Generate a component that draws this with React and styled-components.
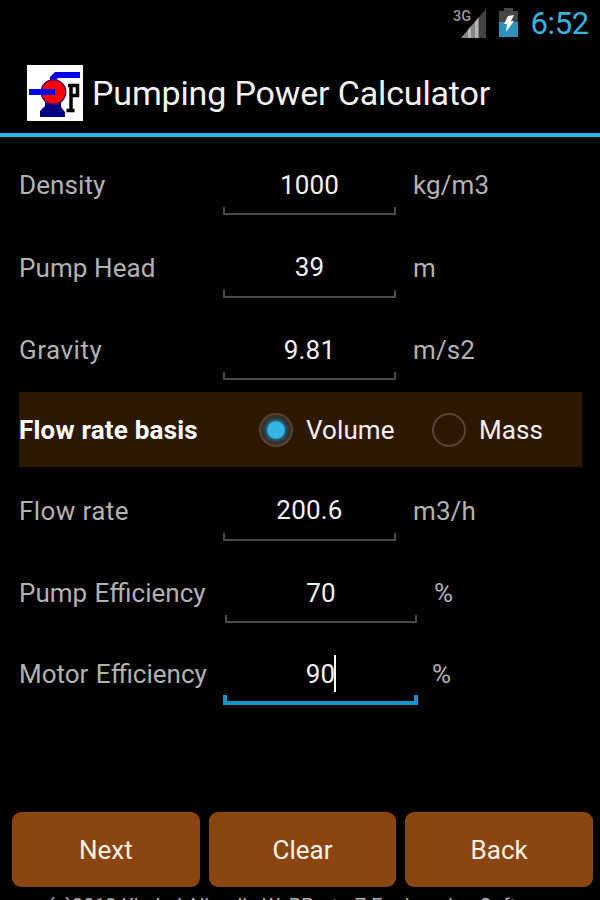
import styled, { createGlobalStyle } from "styled-components";

const GlobalStyle = createGlobalStyle`
  html, body {
    margin: 0;
    background: #000;
    overflow: hidden;
  }
`;

const Screen = styled.div`
  box-sizing: border-box;
  background: #000;
  color: #b2b2b2;
  display: flex;
  flex-direction: column;
  font-family: Roboto, "Noto Sans", sans-serif;
  font-size: 26px;
  height: 900px;
  overflow: hidden;
  width: 600px;
`;

const StatusBar = styled.div`
  display: flex;
  flex: none;
  height: 50px;
  justify-content: flex-end;
  padding-right: 11px;
`;

const StatusIcons = styled.svg`
  display: block;
  height: 50px;
  width: 80px;
`;

const Clock = styled.span`
  color: #33b5e5;
  font-size: 31px;
  letter-spacing: -0.3px;
  line-height: 48px;
`;

const TitleBar = styled.header`
  align-items: center;
  border-bottom: 4px solid #33b5e5;
  box-sizing: border-box;
  display: flex;
  flex: none;
  gap: 9px;
  height: 87px;
  padding: 2px 0 0 27px;
`;

const Logo = styled.svg`
  display: block;
  height: 56px;
  width: 56px;
`;

const Title = styled.h1`
  color: #f3f3f3;
  font-size: 34px;
  font-weight: 400;
  letter-spacing: -0.15px;
  line-height: 40px;
  margin: 0;
`;

const Form = styled.main`
  display: flex;
  flex: none;
  flex-direction: column;
  height: 675px;
  padding-left: 19px;
`;

const Row = styled.div`
  display: flex;
  flex: none;
  height: ${(props) => props.$height || 82.5}px;
`;

const Label = styled.label`
  letter-spacing: ${(props) => props.$spacing ?? 0.1}px;
  line-height: 97px;
  white-space: nowrap;
  width: ${(props) => props.$width || 204}px;
  word-spacing: ${(props) => (props.$spacing === 0 ? 1 : 0)}px;
`;

const Field = styled.div`
  color: #f3f3f3;
  display: flex;
  flex-direction: column;
  height: ${(props) => (props.$focused ? 79 : 78)}px;
  width: ${(props) => props.$width || 173}px;
`;

const FieldValue = styled.div`
  align-items: center;
  box-sizing: border-box;
  display: flex;
  flex: 1;
  justify-content: center;
  letter-spacing: 0.2px;
  line-height: 38px;
  padding-top: ${(props) => (props.$focused ? 27 : 25)}px;
`;

// Open-topped bracket that the text fields sit on
const FieldLine = styled.div`
  border: ${(props) => (props.$focused ? "4px solid #1295c9" : "2px solid #4b4b4b")};
  border-top: none;
  box-sizing: border-box;
  flex: none;
  height: ${(props) => (props.$focused ? 10 : 8)}px;
`;

const Caret = styled.span`
  background: #fff;
  height: 37px;
  margin: 0 -1px 0 -1px;
  width: 2px;
`;

const Unit = styled.span`
  letter-spacing: 0.1px;
  line-height: 97px;
  padding-left: ${(props) => props.$gap || 17}px;
`;

const BasisRow = styled.div`
  align-items: center;
  background: #2f1800;
  color: #f3f3f3;
  display: flex;
  flex: none;
  height: 75px;
  margin: 7.5px 0 -4.5px;
  width: 563px;
`;

const BasisLabel = styled.span`
  color: #fff;
  font-weight: 700;
  letter-spacing: 0.2px;
  width: 240px;
`;

const Option = styled.label`
  align-items: center;
  display: flex;
  gap: 13px;
  letter-spacing: 0.1px;
  width: ${(props) => props.$width}px;
`;

const Radio = styled.span`
  background: ${(props) =>
    props.$checked
      ? "radial-gradient(circle, #33b5e5 0 8px, #216277 9.5px, #30383a 12px, #332b22 16px)"
      : "transparent"};
  border: 2px solid #59432f;
  border-radius: 50%;
  box-sizing: border-box;
  height: 34px;
  width: 34px;
`;

const Buttons = styled.div`
  display: flex;
  flex: none;
  gap: 9px;
  padding: 0 7px 0 12px;
`;

const Button = styled.button`
  background: #8b4511;
  border: none;
  border-radius: 9px;
  color: #fff3e6;
  flex: 1;
  font: inherit;
  height: 75px;
  padding: 0;
`;

const Footer = styled.footer`
  flex: none;
  font-size: 19.8px;
  line-height: 22px;
  margin: 9px 0 0 48px;
  white-space: nowrap;
`;

const FIELDS = [
  { label: "Density", value: "1000", unit: "kg/m3" },
  { label: "Pump Head", value: "39", unit: "m" },
  { label: "Gravity", value: "9.81", unit: "m/s2", spacing: 0.5 },
];

// No letter spacing on the efficiency labels, it would break their "ffi" ligature
const RATES = [
  { label: "Flow rate", value: "200.6", unit: "m3/h", spacing: 0.4 },
  { label: "Pump Efficiency", value: "70", unit: "%", labelWidth: 206, width: 192, height: 80.5, spacing: 0 },
  { label: "Motor Efficiency", value: "90", unit: "%", width: 195, gap: 14, spacing: 0, focused: true },
];

function InputRow({ item }) {
  return (
    <Row $height={item.height}>
      <Label $width={item.labelWidth} $spacing={item.spacing}>
        {item.label}
      </Label>
      <Field $width={item.width} $focused={item.focused}>
        <FieldValue $focused={item.focused}>
          {item.value}
          {item.focused && <Caret />}
        </FieldValue>
        <FieldLine $focused={item.focused} />
      </Field>
      <Unit $gap={item.gap}>{item.unit}</Unit>
    </Row>
  );
}

function PumpLogo() {
  return (
    <Logo viewBox="0 0 56 56">
      <rect width="56" height="56" fill="#fff" />
      <path d="M18 37h16v5l4 5v5h2H13v-6l5-5z" fill="#000084" />
      <path d="M23 16v-4l5-5h25v6H31l-3 4z" fill="#0000f0" />
      <circle cx="26.500" cy="27" r="12.200" fill="#f00" stroke="#5b0060" strokeWidth="1.500" />
      <path d="M2 24h26v6H2z" fill="#0000f0" />
      <path d="M44 46V20.500h6.500v10H44M41 20.500h4M39.500 45.500h8" fill="none" stroke="#000" strokeWidth="3.500" />
    </Logo>
  );
}

function PhoneIcons() {
  return (
    <StatusIcons viewBox="0 0 80 50">
      <text x="3" y="20.500" fill="#999" fontSize="15" fontWeight="500" textLength="18" lengthAdjust="spacingAndGlyphs">
        3G
      </text>
      <path d="M11 38 36 9v29z" fill="#424242" />
      <path d="M11 38 29 17v21z" fill="#858585" />
      <path d="M18 30v8h3V26zM25 22v16h3V18z" fill="#b5b5b5" />
      <path d="M49 11h5V8h9v3h5v11H49z" fill="#474747" />
      <path d="M49 22h19v15H49z" fill="#2f93b9" />
      <path d="m58 16 6-1-3 6h3l-8 11 1-8h-3z" fill="#fff" />
    </StatusIcons>
  );
}

export default function App() {
  return (
    <Screen>
      <GlobalStyle />
      <StatusBar>
        <PhoneIcons />
        <Clock>6:52</Clock>
      </StatusBar>
      <TitleBar>
        <PumpLogo />
        <Title>Pumping Power Calculator</Title>
      </TitleBar>
      <Form>
        {FIELDS.map((item) => (
          <InputRow key={item.label} item={item} />
        ))}
        <BasisRow>
          <BasisLabel>Flow rate basis</BasisLabel>
          <Option $width={173}>
            <Radio $checked />
            Volume
          </Option>
          <Option $width={130}>
            <Radio />
            Mass
          </Option>
        </BasisRow>
        {RATES.map((item) => (
          <InputRow key={item.label} item={item} />
        ))}
      </Form>
      <Buttons>
        <Button>Next</Button>
        <Button>Clear</Button>
        <Button>Back</Button>
      </Buttons>
      <Footer>(c)2012 Khaled Aljundi - W. PProto-Z Engineering Software</Footer>
    </Screen>
  );
}
